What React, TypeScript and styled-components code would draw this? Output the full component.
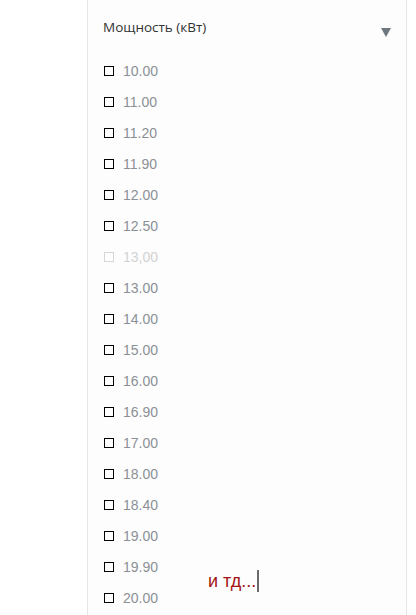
import * as React from "react";
import styled, { createGlobalStyle } from "styled-components";

const GlobalStyle = createGlobalStyle`
  html, body {
    margin: 0;
    padding: 0;
    background: #ffffff;
  }
  body {
    font-family: "Liberation Sans", Arial, sans-serif;
  }
`;

interface IOption {
  value: string;
  disabled?: boolean;
}

const options: IOption[] = [
  { value: "10.00" },
  { value: "11.00" },
  { value: "11.20" },
  { value: "11.90" },
  { value: "12.00" },
  { value: "12.50" },
  { value: "13,00", disabled: true },
  { value: "13.00" },
  { value: "14.00" },
  { value: "15.00" },
  { value: "16.00" },
  { value: "16.90" },
  { value: "17.00" },
  { value: "18.00" },
  { value: "18.40" },
  { value: "19.00" },
  { value: "19.90" },
  { value: "20.00" }
];

/// Styles

const Page = styled.div`
  position: relative;
  height: 615px;
  overflow: hidden;
`;

const Panel = styled.div`
  margin-left: 87px;
  width: 318px;
  height: 615px;
  box-sizing: content-box;
  border-left: 1px solid #e6e6e6;
  border-right: 1px solid #e6e6e6;
  background: #fdfdfd;
  display: flex;
  flex-direction: column;
`;

const Header = styled.div`
  display: flex;
  align-items: center;
  justify-content: space-between;
  height: 55px;
  padding: 0 15px 0 15px;
  box-sizing: border-box;
`;

const Title = styled.span`
  font-family: "Open Sans", "Noto Sans", sans-serif;
  font-size: 13.5px;
  color: #333333;
  margin-top: -1px;
`;

const Arrow = styled.span`
  width: 0;
  height: 0;
  border-left: 5px solid transparent;
  border-right: 5px solid transparent;
  border-top: 9px solid #6f777f;
  margin-top: 9px;
`;

const List = styled.ul`
  list-style: none;
  margin: 0;
  padding: 0 0 0 16px;
`;

const Row = styled.li<{ $disabled?: boolean }>`
  display: flex;
  align-items: center;
  height: 31px;
  gap: 9px;
  font-size: 14px;
  color: ${p => (p.$disabled ? "#d2d2d2" : "#8b9096")};
`;

const Box = styled.span<{ $disabled?: boolean }>`
  width: 8px;
  height: 8px;
  border: 1px solid ${p => (p.$disabled ? "#d6d6d6" : "#000000")};
  background: #ffffff;
  flex: none;
`;

const Note = styled.div`
  position: absolute;
  left: 208px;
  top: 570px;
  display: flex;
  align-items: center;
  height: 22px;
  font-size: 18px;
  color: #a31515;
`;

const Caret = styled.span`
  display: inline-block;
  width: 2px;
  height: 22px;
  margin-left: 1px;
  background: #6b6b6b;
`;

/// Component
export default function App() {
  return (
    <Page>
      <GlobalStyle />
      <Panel>
        <Header>
          <Title>Мощность (кВт)</Title>
          <Arrow />
        </Header>
        <List>
          {options.map((o, i) => (
            <Row key={i} $disabled={o.disabled}>
              <Box $disabled={o.disabled} />
              {o.value}
            </Row>
          ))}
        </List>
      </Panel>
      <Note>
        и тд...
        <Caret />
      </Note>
    </Page>
  );
}
